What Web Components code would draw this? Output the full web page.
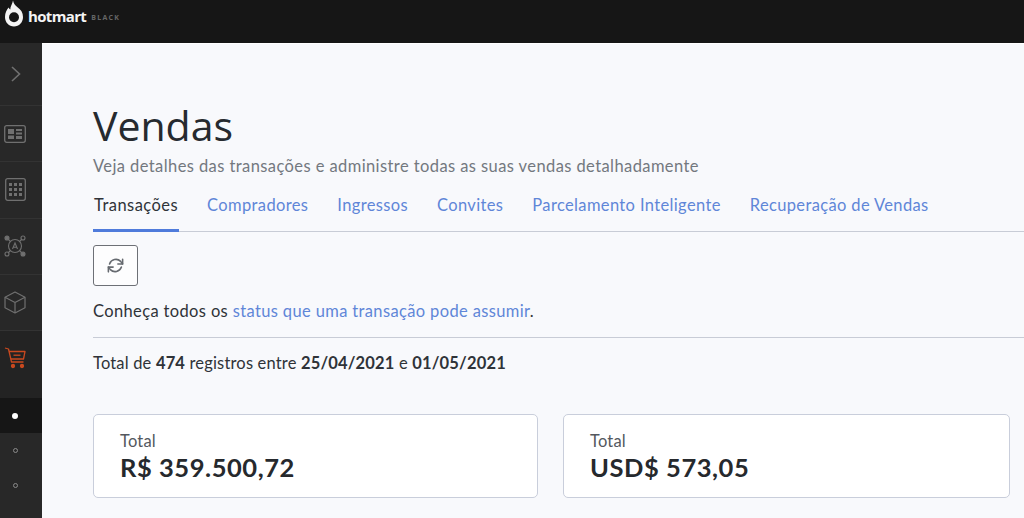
<!DOCTYPE html>
<html lang="pt-BR">
<head>
<meta charset="UTF-8">
<title>Vendas</title>
<style>
  html, body { margin: 0; height: 100%; overflow: hidden; }
  body { font-family: "Lato", "Noto Sans", sans-serif; color: #2a2d31; background: #f8f9fc; }
  hm-app { height: 518px; }
</style>
</head>
<body>
<template id="tpl-app">
  <style>
    :host { display: grid; grid-template-rows: 43px 1fr; grid-template-columns: 42px 1fr; width: 1024px; overflow: hidden; }
    ::slotted(hm-topbar) { grid-column: 1 / 3; }
  </style>
  <slot></slot>
</template>

<template id="tpl-topbar">
  <style>
    :host { display: flex; align-items: flex-start; background: #161616; height: 43px; color: #f4f4f4; padding-left: 4px; box-sizing: border-box; }
    svg { width: 20px; height: 28px; flex: none; }
    b { font: 700 15px/20px "Open Sans", sans-serif; margin: 6px 0 0 4px; letter-spacing: -.65px; }
    span { font: 700 7px/10px "Open Sans", sans-serif; color: #666; letter-spacing: 1.300px; margin: 13px 0 0 5px; }
  </style>
  <svg viewBox="0 0 20 28"><path fill="#f4f4f4" d="M9 .5c.5 2.800 2 4.800 4.500 6.800 3.400 2.400 5.500 5.300 5.500 9.700 0 5.400-4 9.500-9 9.500s-9-4.100-9-9.500c0-4.200 1.800-7.400 3.600-9.400.4 1 1 1.600 1.700 1.900C6.200 6.400 8.400 4 9 .5z"/><circle cx="10" cy="17.300" r="5" fill="#161616"/></svg>
  <b>hotmart</b><span>BLACK</span>
</template>

<template id="tpl-side">
  <style>
    :host { display: flex; flex-direction: column; background: #282828; width: 42px; height: 475px; }
  </style>
  <slot></slot>
</template>

<template id="tpl-side-item">
  <style>
    :host { display: flex; align-items: center; justify-content: center; height: 56.300px; box-sizing: border-box; border-bottom: 1px solid #333; color: #707070; padding-right: 12px; }
    :host([first]) { height: 63px; padding-right: 10px; }
    :host([tall]) { height: 67px; border-bottom: 0; color: #c9491f; background: #232323; align-items: flex-start; padding-top: 16px; }
    ::slotted(svg) { display: block; }
  </style>
  <slot></slot>
</template>

<template id="tpl-side-dot">
  <style>
    :host { display: flex; align-items: center; justify-content: center; height: 35px; padding-right: 12px; }
    i { width: 3px; height: 3px; border: 1.500px solid #8a8a8a; border-radius: 50%; }
    :host([active]) { background: #161616; }
    :host([active]) i { width: 6px; height: 6px; border: 0; background: #fff; }
  </style>
  <i></i>
</template>

<template id="tpl-main">
  <style>
    :host { display: block; background: #f8f9fc; border-top: 1px solid #fff; padding: 56px 0 0 51px; min-width: 0; overflow: hidden; }
    h1 { margin: 0; font: 400 41px/50px "Open Sans", sans-serif; color: #262a2f; }
    .sub { font-size: 16.500px; line-height: 22px; color: #73787f; margin-top: 5px; letter-spacing: .41px; }
  </style>
  <h1>Vendas</h1>
  <div class="sub">Veja detalhes das transações e administre todas as suas vendas detalhadamente</div>
  <slot></slot>
</template>

<template id="tpl-tabs">
  <style>
    :host { display: flex; gap: 27px; border-bottom: 1px solid #c8ccd6; margin-top: 14px; height: 41px; box-sizing: border-box; }
  </style>
  <slot></slot>
</template>

<template id="tpl-tab">
  <style>
    :host { display: block; font-size: 16.500px; line-height: 24px; color: #5f86d8; padding: 2px 1px 0; height: 41px; box-sizing: border-box; letter-spacing: .36px; }
    :host([active]) { color: #2f3338; border-bottom: 3px solid #4f7bdb; letter-spacing: .46px; }
  </style>
  <slot></slot>
</template>

<template id="tpl-refresh">
  <style>
    :host { display: flex; align-items: center; justify-content: center; width: 45px; height: 41px; box-sizing: border-box; border: 1px solid #6d7076; border-radius: 3px; background: #fdfdfe; margin-top: 13px; }
  </style>
  <svg width="19" height="19" viewBox="0 0 24 24" fill="none" stroke="#666a70" stroke-width="2" stroke-linecap="round" stroke-linejoin="round">
    <path d="M21 4v6h-6"/><path d="M3 20v-6h6"/>
    <path d="M4.500 10a8.500 8.500 0 0 1 14-3.200L21 10"/><path d="M19.500 14a8.500 8.500 0 0 1-14 3.200L3 14"/>
  </svg>
</template>

<template id="tpl-summary">
  <style>
    :host { display: block; font-size: 16.500px; line-height: 22px; color: #2f3338; }
    .status { margin-top: 14px; padding-bottom: 15px; border-bottom: 1px solid #c8ccd6; letter-spacing: .36px; }
    a { color: #5f86d8; text-decoration: none; }
    .total { margin-top: 14px; letter-spacing: .17px; }
    b { font-weight: 700; }
  </style>
  <div class="status">Conheça todos os <a>status que uma transação pode assumir</a>.</div>
  <div class="total">Total de <b>474</b> registros entre <b>25/04/2021</b> e <b>01/05/2021</b></div>
</template>

<template id="tpl-cards">
  <style>
    :host { display: flex; gap: 25px; margin-top: 40px; }
  </style>
  <slot></slot>
</template>

<template id="tpl-card">
  <style>
    :host { display: block; box-sizing: border-box; height: 84px; background: #fff; border: 1px solid #c9cedb; border-radius: 5px; padding: 15px 26px 0; }
    .l { font-size: 16.500px; line-height: 22px; color: #54585e; letter-spacing: .2px; }
    .v { font-size: 25.500px; line-height: 30px; font-weight: 700; color: #26292d; letter-spacing: .55px; }
  </style>
  <div class="l"><slot name="label"></slot></div>
  <div class="v"><slot name="value"></slot></div>
</template>

<hm-app>
  <hm-topbar></hm-topbar>
  <hm-side>
    <hm-side-item first>
      <svg width="12" height="18" viewBox="0 0 12 18" fill="none" stroke="currentColor" stroke-width="1.600"><path d="M2 2l7.500 7L2 16"/></svg>
    </hm-side-item>
    <hm-side-item>
      <svg width="22" height="18" viewBox="0 0 22 18" fill="none" stroke="currentColor" stroke-width="1.300"><rect x=".7" y=".7" width="20.600" height="16.600" rx="2"/><path fill="currentColor" stroke="none" d="M4 4h6v5H4zM12 4h6v2h-6zM12 7.500h6v2h-6zM4 10.500h6V14H4zM12 11h6v3h-6z"/></svg>
    </hm-side-item>
    <hm-side-item>
      <svg width="21" height="23" viewBox="0 0 21 23" fill="none" stroke="currentColor" stroke-width="1.300"><rect x=".7" y=".7" width="19.600" height="21.600" rx="2"/><g fill="currentColor" stroke="none"><rect x="4" y="5" width="3" height="3"/><rect x="9" y="5" width="3" height="3"/><rect x="14" y="5" width="3" height="3"/><rect x="4" y="10" width="3" height="3"/><rect x="9" y="10" width="3" height="3"/><rect x="14" y="10" width="3" height="3"/><rect x="4" y="15" width="3" height="3"/><rect x="9" y="15" width="3" height="3"/><rect x="14" y="15" width="3" height="3"/></g></svg>
    </hm-side-item>
    <hm-side-item>
      <svg width="24" height="24" viewBox="0 0 24 24" fill="none" stroke="currentColor" stroke-width="1.100"><circle cx="12" cy="12" r="6.500"/><path d="M9.500 15l2.500-6 2.500 6M10.300 13.200h3.400"/><path d="M5 5l2.800 2.800M19 5l-2.800 2.800M5 19l2.500-2.500M19 19l-2.500-2.500"/><circle cx="4" cy="4" r="2" fill="currentColor"/><circle cx="20" cy="4" r="2"/><circle cx="4" cy="20" r="2"/><circle cx="20" cy="20" r="2" fill="currentColor"/></svg>
    </hm-side-item>
    <hm-side-item>
      <svg width="22" height="23" viewBox="0 0 22 23" fill="none" stroke="currentColor" stroke-width="1.200" stroke-linejoin="round"><path d="M11 1l10 5.200v10.600L11 22 1 16.800V6.200z"/><path d="M1 6.200L11 11.500l10-5.300M11 11.500V22"/></svg>
    </hm-side-item>
    <hm-side-item tall>
      <svg width="22" height="22" viewBox="0 0 22 22" fill="none" stroke="currentColor" stroke-width="1.300" stroke-linejoin="round"><path d="M1 1l3.500 1 3 13h12"/><path d="M5 4.500h16l-1.500 7.500H7"/><path d="M9.500 8.200h7"/><circle cx="9" cy="19" r="1.500" fill="currentColor"/><circle cx="18" cy="19" r="1.500" fill="currentColor"/></svg>
    </hm-side-item>
    <hm-side-dot active></hm-side-dot>
    <hm-side-dot></hm-side-dot>
    <hm-side-dot></hm-side-dot>
  </hm-side>
  <hm-main>
    <hm-tabs>
      <hm-tab active>Transações</hm-tab>
      <hm-tab>Compradores</hm-tab>
      <hm-tab>Ingressos</hm-tab>
      <hm-tab>Convites</hm-tab>
      <hm-tab>Parcelamento Inteligente</hm-tab>
      <hm-tab>Recuperação de Vendas</hm-tab>
    </hm-tabs>
    <hm-refresh></hm-refresh>
    <hm-summary></hm-summary>
    <hm-cards>
      <hm-card style="width:445px"><span slot="label">Total</span><span slot="value">R$ 359.500,72</span></hm-card>
      <hm-card style="width:447px"><span slot="label">Total</span><span slot="value">USD$ 573,05</span></hm-card>
    </hm-cards>
  </hm-main>
</hm-app>

<script>
  // every element just clones its template into an open shadow root
  function define(name, tplId) {
    customElements.define(name, class extends HTMLElement {
      constructor() {
        super();
        this.attachShadow({mode: 'open'});
        this.shadowRoot.append(document.getElementById(tplId).content.cloneNode(true));
      }
    });
  }
  define('hm-app', 'tpl-app');
  define('hm-topbar', 'tpl-topbar');
  define('hm-side', 'tpl-side');
  define('hm-side-item', 'tpl-side-item');
  define('hm-side-dot', 'tpl-side-dot');
  define('hm-main', 'tpl-main');
  define('hm-tabs', 'tpl-tabs');
  define('hm-tab', 'tpl-tab');
  define('hm-refresh', 'tpl-refresh');
  define('hm-summary', 'tpl-summary');
  define('hm-cards', 'tpl-cards');
  define('hm-card', 'tpl-card');
</script>
</body>
</html>
